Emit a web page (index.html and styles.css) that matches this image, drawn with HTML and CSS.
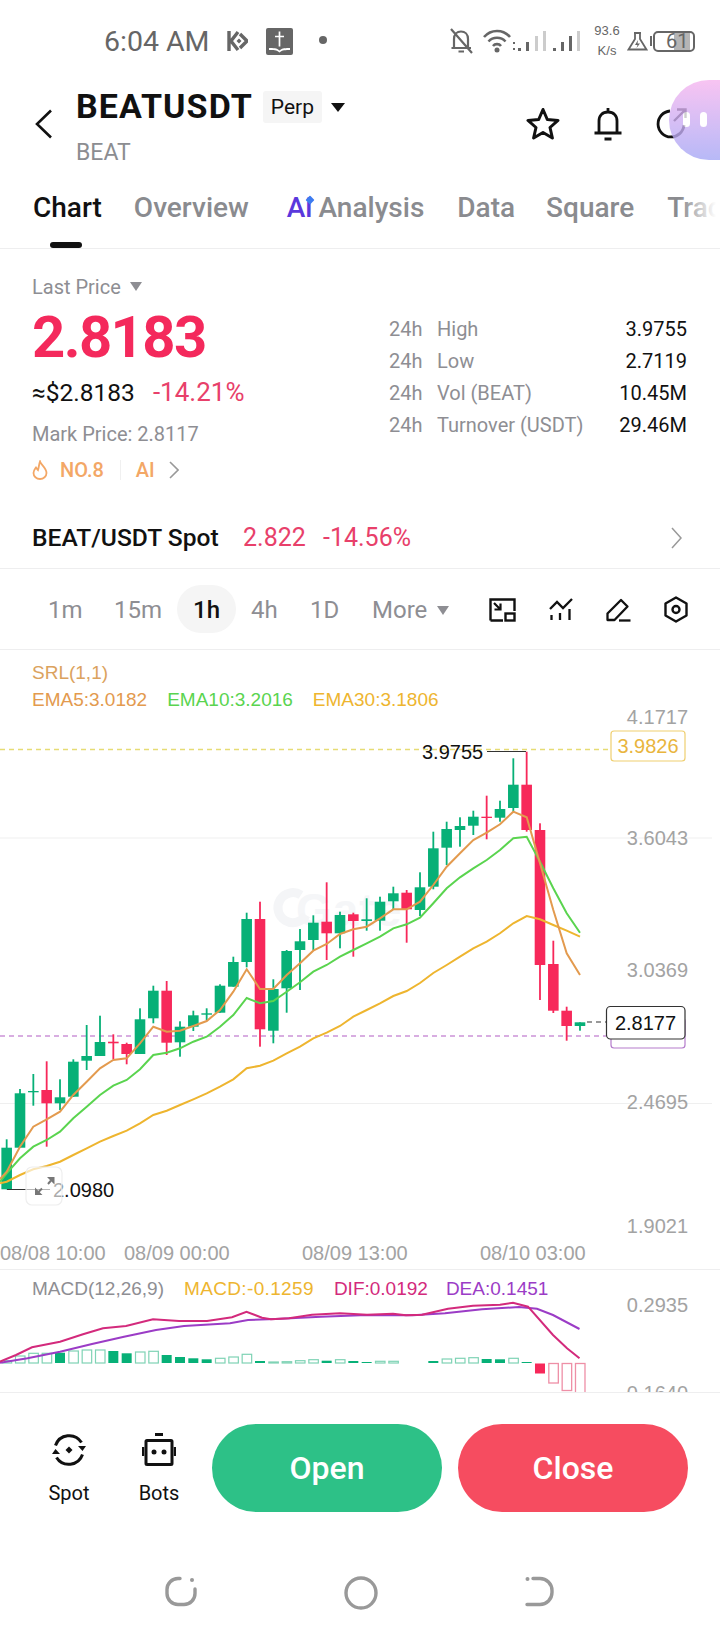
FILE: index.html
```html
<!DOCTYPE html>
<html lang="en">

<head>
    <meta charset="UTF-8">
    <title>BEATUSDT Perp</title>
    <link rel="stylesheet" href="styles.css">
</head>

<body>

<div class="status">
    <span class="clock">6:04 AM</span>
    <svg class="st-k" width="22" height="22" viewBox="0 0 22 22"><path d="M3 1V21M12 2L5 11L12 20M14 4L21 11L14 18" fill="none" stroke="#666" stroke-width="3.4"/><path d="M13 8.5L15.5 11L13 13.5L10.5 11Z" fill="#666"/></svg>
    <svg class="st-book" width="27" height="27" viewBox="0 0 27 27"><rect width="27" height="27" rx="2" fill="#666"/><path d="M13.5 3.500V18.500M9 8.500H18" stroke="#fff" stroke-width="1.700"/><path d="M3 20C7 20 11 20 13.500 22.500C16 20 20 20 24 20V22C20 22 16 22 13.500 24.500C11 22 7 22 3 22Z" fill="#fff"/></svg>
    <span class="st-dot"></span>
    <span class="status-right">
        <svg width="25" height="26" viewBox="0 0 25 26"><path d="M5 20V11C5 6.500 8 3.500 12 3.500C16 3.500 19 6.500 19 11V20M2.500 20H22M9.500 23.500H15M2 1L23 25" fill="none" stroke="#666" stroke-width="2.200"/></svg>
        <svg class="st-wifi" width="33" height="24" viewBox="0 0 33 24"><path d="M1 8C8 0 20 0 27 8M5.500 12.500C10 7.500 18 7.500 22.500 12.500M10 17C12 14.500 16 14.500 18 17" fill="none" stroke="#666" stroke-width="2.600"/><circle cx="14" cy="21" r="2.500" fill="#666"/><path d="M31 13v2M31 19v2" stroke="#666" stroke-width="2"/></svg>
        <svg class="st-signal" width="64" height="22" viewBox="0 0 64 22"><g fill="#666"><rect x="1" y="18" width="3" height="3"/><rect x="9" y="12" width="3" height="9"/><rect x="36" y="18" width="3" height="3"/><rect x="44" y="12" width="3" height="9"/><rect x="52" y="6" width="3" height="15"/></g><g fill="#ccc"><rect x="18" y="6" width="3" height="15"/><rect x="26" y="1" width="3" height="20"/><rect x="60" y="1" width="3" height="20"/></g></svg>
        <span class="st-speed">93.6<br>K/s</span>
        <svg class="st-flask" width="21" height="19" viewBox="0 0 21 19"><path d="M7 1H14M8 1V7L1.500 17.500H19.500L13 7V1" fill="none" stroke="#666" stroke-width="1.800"/><path d="M11 8L8 13H10.500L9.500 16L13 11.500H10.500Z" fill="#666"/></svg>
        <span class="st-nub"></span>
        <span class="st-batt">61</span>
    </span>
</div>

<div class="head">
    <svg class="back" width="18" height="30" viewBox="0 0 18 30"><path d="M16 1.500L2 15L16 28.500" fill="none" stroke="#111" stroke-width="2.600"/></svg>
    <div class="title-col">
        <div class="title-row">
            <span class="title">BEATUSDT</span>
            <span class="chip">Perp</span>
            <span class="tri-black"></span>
        </div>
        <div class="subtitle">BEAT</div>
    </div>
    <div class="head-icons">
        <svg width="34" height="33" viewBox="0 0 34 33"><path d="M17 2.500L21.300 12.500L32 13.400L24 20.500L26.400 31L17 25.500L7.600 31L10 20.500L2 13.400L12.700 12.500Z" fill="none" stroke="#111" stroke-width="3" stroke-linejoin="round"/></svg>
        <svg width="30" height="34" viewBox="0 0 30 34"><path d="M6 25V14C6 8.500 9.500 5 15 5C20.500 5 24 8.500 24 14V25M1.500 26H28.500M11.500 32H18.500M15 1V5" fill="none" stroke="#111" stroke-width="2.800"/></svg>
        <svg width="32" height="32" viewBox="0 0 32 32"><path d="M14 4A13 13 0 1 0 28 18" fill="none" stroke="#111" stroke-width="2.800"/><path d="M18 14L29 3M21 2.500H29.500V11" fill="none" stroke="#111" stroke-width="2.400"/></svg>
    </div>
</div>

<div class="tabs">
    <span class="tab tab-on">Chart</span>
    <span class="tab tab-over">Overview</span>
    <span class="tab tab-ai"><span class="ai-mark">Ai</span>Analysis</span>
    <span class="tab">Data</span>
    <span class="tab tab-sq">Square</span>
    <span class="tab">Trac</span>
    <span class="tab-fade"></span>
</div>

<div class="summary">
    <div class="sum-left">
        <div class="last-label">Last Price <span class="tri-grey"></span></div>
        <div class="big-price">2.8183</div>
        <div class="usd-row"><span>≈$2.8183</span><span class="red usd-pct">-14.21%</span></div>
        <div class="mark">Mark Price: 2.8117</div>
        <div class="rank">
            <svg width="16" height="20" viewBox="0 0 16 20"><path d="M8 1.500C9 5 14.500 8 14.500 13A6.500 6 0 0 1 1.500 13C1.500 10.500 3 9 4 7.500C5 9 5.500 9.500 6 10C7 7 7 4 8 1.500Z" fill="none" stroke="#f3a766" stroke-width="1.800"/></svg>
            <span class="rank-no">NO.8</span>
            <span class="rank-sep"></span>
            <span>AI</span>
            <svg class="rank-go" width="10" height="18" viewBox="0 0 10 18"><path d="M1 1L9 9L1 17" fill="none" stroke="#999" stroke-width="1.600"/></svg>
        </div>
    </div>
    <div class="stats">
        <div class="stat"><span class="h24">24h</span><span class="stat-name">High</span><span class="stat-val">3.9755</span></div>
        <div class="stat"><span class="h24">24h</span><span class="stat-name">Low</span><span class="stat-val">2.7119</span></div>
        <div class="stat"><span class="h24">24h</span><span class="stat-name">Vol (BEAT)</span><span class="stat-val">10.45M</span></div>
        <div class="stat"><span class="h24">24h</span><span class="stat-name">Turnover (USDT)</span><span class="stat-val">29.46M</span></div>
    </div>
</div>

<div class="spot-row">
    <span class="spot-name">BEAT/USDT Spot</span>
    <span class="red spot-price">2.822</span>
    <span class="red">-14.56%</span>
    <svg class="spot-go" width="11" height="22" viewBox="0 0 11 22"><path d="M1 1L10 11L1 21" fill="none" stroke="#999" stroke-width="1.500"/></svg>
</div>

<div class="intervals">
    <span class="iv iv-1m">1m</span>
    <span class="iv iv-15">15m</span>
    <span class="iv iv-on">1h</span>
    <span class="iv iv-4h">4h</span>
    <span class="iv iv-1d">1D</span>
    <span class="iv iv-more">More <span class="tri-grey"></span></span>
    <span class="tools">
        <svg width="27" height="24" viewBox="0 0 27 24"><path d="M1.500 22.500V1.500H25.500V13M1.500 22.500H14" fill="none" stroke="#111" stroke-width="2.400"/><rect x="16.500" y="15.500" width="9" height="7" fill="none" stroke="#111" stroke-width="2.400"/><path d="M5 5L11 11M11.500 5.500V11.500H5.500" fill="none" stroke="#111" stroke-width="2.200"/></svg>
        <svg width="24" height="23" viewBox="0 0 24 23"><path d="M1 11L8 4L14 10L23 1" fill="none" stroke="#111" stroke-width="2.300"/><path d="M2.500 17V22M11 15V22M20.500 11V22" fill="none" stroke="#111" stroke-width="2.300"/></svg>
        <svg width="25" height="24" viewBox="0 0 25 24"><path d="M1.500 22V15.500L15 2L21.500 8.500L8.500 22Z" fill="none" stroke="#111" stroke-width="2.300" stroke-linejoin="round"/><path d="M13 22.500H24.500" stroke="#111" stroke-width="2.300"/></svg>
        <svg width="24" height="27" viewBox="0 0 24 27"><path d="M12 1.500L22.500 7.500V19.500L12 25.500L1.500 19.500V7.500Z" fill="none" stroke="#111" stroke-width="2.400" stroke-linejoin="round"/><circle cx="12" cy="13.500" r="3.500" fill="none" stroke="#111" stroke-width="2.400"/></svg>
    </span>
</div>

<div class="kline">
    <svg class="plot" id="kline-plot" width="720" height="619" viewBox="0 650 720 619"></svg>
    <div class="legend">
        <div class="srl">SRL(1,1)</div>
        <div class="ema-row">
            <span class="c-ema5">EMA5:3.0182</span>
            <span class="c-ema10">EMA10:3.2016</span>
            <span class="c-ema30">EMA30:3.1806</span>
        </div>
    </div>
</div>

<div class="macd">
    <svg class="plot" id="macd-plot" width="720" height="122" viewBox="0 1270 720 122"></svg>
    <div class="macd-legend">
        <span class="c-macd">MACD(12,26,9)</span>
        <span class="c-ema30 c-macdval">MACD:-0.1259</span>
        <span class="c-dif">DIF:0.0192</span>
        <span class="c-dea">DEA:0.1451</span>
    </div>
</div>

<div class="actions">
    <div class="side-btn">
        <svg width="34" height="34" viewBox="0 0 34 34"><path d="M3.500 12.500A14.500 14.500 0 0 1 29.500 9.500M30.500 21.500A14.500 14.500 0 0 1 4.500 24.500" fill="none" stroke="#111" stroke-width="3"/><path d="M26 13H34L30.500 18ZM0 21H8L3.500 16Z" fill="#111"/><path d="M17 13.500L20.500 17L17 20.500L13.500 17Z" fill="#111"/></svg>
        <span>Spot</span>
    </div>
    <div class="side-btn">
        <svg width="34" height="34" viewBox="0 0 34 34"><path d="M13 1.500H21" stroke="#111" stroke-width="3"/><rect x="4" y="7.500" width="26" height="24" rx="1" fill="none" stroke="#111" stroke-width="3"/><path d="M1 14V23M33 14V23" stroke="#111" stroke-width="2.500"/><circle cx="12" cy="19" r="2.500" fill="#111"/><circle cx="22" cy="19" r="2.500" fill="#111"/></svg>
        <span>Bots</span>
    </div>
    <button class="trade trade-open">Open</button>
    <button class="trade trade-close">Close</button>
</div>

<div class="nav">
    <svg width="32" height="31" viewBox="0 0 32 31"><path d="M15 2.500H13A11 11 0 0 0 2 13.500V17.500A11 11 0 0 0 13 28.500H19A11 11 0 0 0 30 17.500V13" fill="none" stroke="#999" stroke-width="3.400" stroke-linecap="round"/><circle cx="27" cy="4" r="2" fill="#999"/></svg>
    <svg width="34" height="34" viewBox="0 0 34 34"><circle cx="17" cy="17" r="15" fill="none" stroke="#999" stroke-width="3.400"/></svg>
    <svg width="29" height="31" viewBox="0 0 29 31"><path d="M8 2.500H15A12 12 0 0 1 27 14.500V16.500A12 12 0 0 1 15 28.500H2" fill="none" stroke="#999" stroke-width="3.400" stroke-linecap="round"/><circle cx="2.500" cy="3" r="2" fill="#999"/></svg>
</div>

<div class="float-ball"><span></span><span></span></div>

<script src="chart.js"></script>

</body>
</html>
```

FILE: styles.css
```css
* {
    box-sizing: border-box;
}

body {
    margin: 0;
    width: 720px;
    height: 1640px;
    overflow: hidden;
    position: relative;
    background-color: #fff;
    font-family: Roboto, "Noto Sans", sans-serif;
    color: #111;
}

.red {
    color: #e8406a;
}

.status {
    height: 80px;
    padding-top: 2px;
    padding-left: 104px;
    display: flex;
    align-items: center;
    color: #666;
}

.clock {
    font-size: 28.5px;
    width: 122px;
}

.st-book {
    margin-left: 18px;
}

.st-dot {
    width: 8px;
    height: 8px;
    margin-left: 26px;
    margin-top: -2px;
    border-radius: 50%;
    background-color: #666;
}

.status-right {
    margin-left: auto;
    margin-right: 25px;
    display: flex;
    align-items: center;
}

.st-wifi {
    margin-left: 9px;
}

.st-signal {
    margin-left: 1px;
}

.st-speed {
    width: 30px;
    margin-left: 11px;
    font-size: 13px;
    line-height: 20px;
    text-align: center;
    font-family: "Liberation Sans", sans-serif;
}

.st-flask {
    margin-left: 5px;
}

.st-nub {
    width: 2px;
    height: 10px;
    margin-left: 2px;
    background-color: #666;
}

.st-batt {
    width: 42px;
    height: 21px;
    margin-left: 1px;
    border: 2px solid #666;
    border-radius: 5px;
    font-size: 20px;
    line-height: 17px;
    padding-left: 11px;
    background: linear-gradient(90deg, #fff 50%, #b5b5b5 50%, #b5b5b5 92%, #fff 92%);
}

.head {
    height: 92px;
    padding-left: 35px;
    display: flex;
}

.back {
    margin-top: 29px;
}

.title-col {
    margin-left: 23px;
}

.title-row {
    display: flex;
    align-items: center;
    height: 52px;
}

.title {
    font-size: 34px;
    font-weight: 700;
    letter-spacing: 1.100px;
}

.chip {
    margin-left: 10px;
    margin-top: 2px;
    width: 59px;
    height: 32px;
    background-color: #f5f5f5;
    border-radius: 3px;
    font-size: 21px;
    line-height: 32px;
    text-align: center;
}

.tri-black {
    margin-left: 9px;
    margin-top: 3px;
    border-left: 7px solid transparent;
    border-right: 7px solid transparent;
    border-top: 9px solid #111;
}

.tri-grey {
    display: inline-block;
    margin-left: 4px;
    vertical-align: 3px;
    border-left: 6px solid transparent;
    border-right: 6px solid transparent;
    border-top: 9px solid #8e8e93;
}

.subtitle {
    margin-top: 7px;
    font-size: 23px;
    color: #8c8d91;
}

.head-icons {
    margin-left: auto;
    margin-right: 32px;
    margin-top: 27px;
    display: flex;
    align-items: flex-start;
    gap: 33px;
}

.tabs {
    height: 77px;
    padding-left: 33px;
    padding-top: 18px;
    display: flex;
    gap: 33px;
    overflow: hidden;
    position: relative;
    border-bottom: 1px solid #eeeeef;
    white-space: nowrap;
}

.tab {
    font-size: 28px;
    line-height: 36px;
    font-weight: 500;
    color: #8a8b8f;
    flex: none;
}

.tab-on {
    color: #111;
    position: relative;
}

.tab-on::after {
    content: "";
    position: absolute;
    left: 17px;
    top: 52px;
    width: 32px;
    height: 6px;
    border-radius: 3px;
    background-color: #111;
}

.tab-over {
    margin-left: -1px;
}

.tab-sq {
    margin-left: -2px;
}

.tab-fade {
    position: absolute;
    right: 0;
    top: 0;
    width: 40px;
    height: 76px;
    background: linear-gradient(90deg, rgba(255, 255, 255, 0), #fff 90%);
}

.tab-ai {
    margin-left: 5px;
}

.ai-mark {
    color: #5a38dc;
    margin-right: 6px;
    position: relative;
}

.ai-mark::after {
    content: "";
    position: absolute;
    right: -1px;
    top: 5px;
    width: 8px;
    height: 8px;
    background-color: #3d7bf0;
    transform: rotate(45deg) scale(0.8);
    border-radius: 1px;
}

.summary {
    height: 241px;
    padding: 0 33px 0 32px;
    display: flex;
    justify-content: space-between;
}

.last-label {
    margin-top: 26px;
    font-size: 20px;
    line-height: 24px;
    color: #8e8e93;
}

.big-price {
    margin-top: 3px;
    font-size: 58px;
    line-height: 70px;
    font-weight: 700;
    letter-spacing: -1.600px;
    color: #f4295c;
}

.usd-row {
    margin-top: 4px;
    display: flex;
    align-items: baseline;
    gap: 18px;
    font-size: 24.500px;
    line-height: 32px;
}

.usd-pct {
    font-size: 26px;
}

.mark {
    margin-top: 12px;
    font-size: 20px;
    line-height: 26px;
    color: #8e8e93;
}

.rank {
    margin-top: 10px;
    display: flex;
    align-items: center;
    font-size: 20px;
    line-height: 26px;
    font-weight: 500;
    color: #f3a766;
}

.rank-no {
    margin-left: 12px;
}

.rank-sep {
    width: 1px;
    height: 20px;
    margin: 0 15px 0 16px;
    background-color: #f0f0f0;
}

.rank-go {
    margin-left: 14px;
}

.stats {
    width: 298px;
    padding-top: 64px;
}

.stat {
    display: flex;
    height: 32px;
    align-items: center;
    font-size: 20px;
    color: #8e8e93;
}

.h24 {
    width: 48px;
}

.stat-val {
    margin-left: auto;
    color: #111;
}

.spot-row {
    height: 79px;
    padding: 18px 38px 1px 32px;
    display: flex;
    align-items: center;
    border-bottom: 1px solid #eeeeef;
    font-size: 25px;
}

.spot-name {
    font-size: 24.600px;
    font-weight: 500;
    width: 211px;
}

.spot-price {
    width: 80px;
}

.spot-go {
    margin-left: auto;
}

.intervals {
    height: 81px;
    padding-top: 16px;
    display: flex;
    align-items: flex-start;
    border-bottom: 1px solid #eeeeef;
    font-size: 24px;
    color: #8e8e93;
    position: relative;
}

.iv {
    line-height: 50px;
    flex: none;
}

.iv-1m {
    margin-left: 48px;
    width: 66px;
}

.iv-15 {
    width: 63px;
}

.iv-on {
    width: 59px;
    height: 48px;
    border-radius: 24px;
    background-color: #f5f5f5;
    color: #111;
    font-weight: 500;
    text-align: center;
}

.iv-4h {
    margin-left: 15px;
    width: 59px;
}

.iv-1d {
    width: 62px;
}

.iv-more {
    width: 90px;
}

.tools {
    margin-top: 11px;
    margin-left: 27px;
    display: flex;
    align-items: center;
    gap: 33px;
}

.kline {
    height: 620px;
    position: relative;
    border-bottom: 1px solid #eeeeef;
    font-family: "Liberation Sans", sans-serif;
}

.plot {
    position: absolute;
    left: 0;
    top: 0;
    display: block;
}

.plot text {
    font-family: "Liberation Sans", sans-serif;
}

.legend {
    position: relative;
    padding: 9px 0 0 32px;
    font-size: 19px;
    line-height: 27px;
}

.srl {
    color: #dba25e;
}

.ema-row {
    display: flex;
    gap: 20px;
}

.c-ema5 {
    color: #e39a4e;
}

.c-ema10 {
    color: #5ad44f;
}

.c-ema30 {
    color: #eeb52f;
}

.c-macd {
    color: #8e8e93;
}

.c-macdval {
    letter-spacing: 0.350px;
}

.c-dif {
    color: #d32a7c;
}

.c-dea {
    margin-left: -2px;
    color: #9b3cc6;
}

.macd {
    height: 123px;
    position: relative;
    overflow: hidden;
    border-bottom: 1px solid #eeeeef;
    font-family: "Liberation Sans", sans-serif;
}

.macd-legend {
    position: relative;
    padding: 5px 0 0 32px;
    display: flex;
    gap: 20px;
    font-size: 19px;
    line-height: 28px;
}

.actions {
    height: 148px;
    padding: 31px 32px 0 0;
    display: flex;
    align-items: flex-start;
}

.side-btn {
    width: 90px;
    margin-top: 9px;
    display: flex;
    flex-direction: column;
    align-items: center;
    font-size: 20px;
    line-height: 26px;
}

.side-btn:first-child {
    margin-left: 24px;
}

.side-btn span {
    margin-top: 13px;
}

.trade {
    width: 230px;
    height: 88px;
    border: none;
    border-radius: 44px;
    color: #fff;
    font-family: Roboto, sans-serif;
    font-size: 32px;
    font-weight: 500;
}

.trade-open {
    margin-left: 8px;
    background-color: #2dc187;
}

.trade-close {
    margin-left: 16px;
    background-color: #f64c60;
}

.nav {
    padding: 35px 166px 0 165px;
    display: flex;
    justify-content: space-between;
    align-items: flex-start;
}

.float-ball {
    position: absolute;
    right: 0;
    top: 80px;
    width: 51px;
    height: 80px;
    padding: 32px 0 0 14px;
    display: flex;
    gap: 10px;
    border-radius: 40px 0 0 40px;
    background: linear-gradient(180deg, #f7b6f0, #a6a8f6);
    opacity: 0.8;
}

.float-ball span {
    width: 7px;
    height: 15px;
    border-radius: 4px;
    background-color: #fff;
}
```

FILE: chart.js
```js
const GREEN = '#07b077';
const RED = '#f7285a';
const STEP = 13.333;

// body top, body bottom, high, low, colour
const candles = [
    [1147.7, 1189.3, 1139.3, 1189.3, 'g'], [1093.3, 1147.7, 1089, 1147.7, 'g'], [1091, 1092.3, 1074, 1105.7, 'g'],
    [1090, 1103.3, 1061.3, 1146.7, 'r'], [1097.3, 1103.3, 1079.3, 1110, 'g'], [1061.7, 1096.7, 1059.3, 1097, 'g'],
    [1056, 1060.7, 1025, 1070, 'g'], [1042, 1056, 1015.7, 1056, 'g'], [1041.7, 1043.3, 1034.3, 1059.3, 'r'],
    [1044, 1054, 1042.7, 1064.3, 'r'], [1019.3, 1054, 1008.3, 1054, 'g'], [990.7, 1018.3, 985.7, 1023.3, 'g'],
    [990.7, 1042.7, 981, 1055, 'r'], [1026.7, 1042.3, 1021.3, 1056.7, 'g'], [1015.3, 1026.7, 1010.7, 1031, 'g'],
    [1013.3, 1014.7, 1008.3, 1020, 'g'], [985.7, 1012.7, 984.3, 1012.7, 'g'], [962, 986.7, 956.7, 986.7, 'g'],
    [919, 962, 912.7, 967.3, 'g'], [919, 1029.3, 901.7, 1046.7, 'r'], [989, 1030.7, 979.3, 1043.3, 'g'],
    [951, 988.3, 950, 1012.7, 'g'], [941.3, 950, 929, 990, 'g'], [922.7, 940, 915.3, 950, 'g'],
    [921.7, 933.3, 882.3, 960, 'r'], [915, 933.3, 911.7, 948.3, 'g'], [914.3, 921, 912.7, 956.7, 'r'],
    [919.3, 921, 898.3, 930.7, 'g'], [901.7, 920.7, 896.7, 930.7, 'g'], [893.3, 901.3, 886.7, 910, 'g'],
    [892.7, 909.3, 890, 942.7, 'r'], [887.3, 910, 872.3, 916, 'g'], [848.3, 886.7, 831.7, 889.3, 'g'],
    [829, 847.7, 821.7, 865, 'g'], [826, 830, 817.3, 846.7, 'g'], [816.7, 825.7, 810.7, 835, 'g'],
    [816.7, 818, 795.7, 839.3, 'r'], [809, 817.7, 800.7, 821.7, 'g'], [784.7, 808, 758.3, 811.7, 'g'],
    [784.7, 830, 751.7, 831.7, 'r'], [830, 965, 823.3, 1000, 'r'], [964, 1010.7, 940.7, 1013, 'r'],
    [1010.7, 1026, 1006.7, 1040.7, 'r'], [1022.3, 1026, 1022.3, 1030.7, 'g']
];

const ema5 = [1171.7, 1146.7, 1126.7, 1119.3, 1111.7, 1095, 1081.7, 1068.3, 1060, 1058.3, 1043.3, 1026.7, 1031.7, 1030.7, 1026, 1021, 1010, 991.7, 969.3, 989, 989, 975, 963.3, 950.7, 944, 934, 929.3, 926.7, 918.3, 909.3, 909.3, 901.7, 885, 866.7, 853.3, 840, 832.7, 824.3, 811.7, 817.3, 863.3, 910, 953.3, 975];
const ema10 = [1173.3, 1158.3, 1146.7, 1140, 1131.7, 1118.3, 1106.7, 1095, 1085.7, 1080, 1069.3, 1055, 1052.7, 1048.3, 1041.7, 1036.7, 1026.7, 1015, 998, 1003.3, 1001, 991.7, 982.3, 971.7, 965, 956.7, 950, 943.3, 936.7, 928.3, 924.3, 917.7, 903.3, 888.3, 877.3, 868.3, 860, 850, 838.3, 836.7, 861.7, 888.3, 913.3, 932.7];
const ema30 = [1181.7, 1175, 1169.3, 1166, 1161.7, 1155, 1148.3, 1141.7, 1136, 1130.7, 1123.3, 1115, 1110.7, 1105, 1099.3, 1093.3, 1086.7, 1079.3, 1068.3, 1065.7, 1060.7, 1053.3, 1046.7, 1038.3, 1032.7, 1026, 1016.7, 1010, 1003.3, 996, 991, 983, 973, 965, 956.7, 948.3, 941.7, 933.3, 923.3, 916, 919.3, 925, 930.7, 936.7];

const dif = [[0, 1361.7], [16, 1355], [32, 1347.3], [60, 1341.7], [83, 1334.3], [103, 1328.3], [126, 1326], [153, 1319.3], [179, 1321], [207, 1321], [232, 1317.3], [246.5, 1311.7], [262, 1317.7], [271, 1319.3], [289, 1318.3], [312, 1314.7], [340, 1313.3], [367, 1314.7], [393, 1313.7], [406, 1315.3], [422, 1314.7], [448, 1308.7], [473, 1305.7], [500, 1304.7], [513, 1302.7], [528, 1306.7], [553, 1335], [567, 1348.3], [579.5, 1358.3]];
const dea = [[0, 1362.7], [27.5, 1358.3], [60, 1351.7], [92, 1344], [124, 1336.7], [156, 1330], [184, 1326], [230, 1323.3], [248, 1320], [275.5, 1319], [321, 1316.7], [367, 1315], [413, 1315.3], [445, 1313.3], [482, 1309.3], [519, 1307], [537, 1308.7], [553, 1315], [579.5, 1329]];

// bar top in px, filled or hollow; the last four are negative bars
const bars = [
    [1360.7, 0], [1356, 0], [1353.3, 0], [1353.3, 0], [1352.7, 1], [1351, 0], [1350, 0], [1350, 0], [1351, 1], [1353.3, 1],
    [1352, 0], [1351.3, 0], [1355, 1], [1357, 1], [1358.3, 1], [1359.3, 1], [1358.3, 0], [1357, 0], [1354.3, 0], [1361, 1],
    [1362, 0], [1361.7, 0], [1360.7, 0], [1359.7, 0], [1360.7, 1], [1359.7, 0], [1361, 1], [1362, 1], [1361.3, 0], [1361.3, 0],
    null, null, [1361, 1], [1359, 0], [1358.3, 0], [1357.7, 0], [1359, 1], [1359.3, 1], [1358.3, 0], [1362, 1]
];

function midX(i) {
    return 6.67 + STEP * i;
}

function linePoints(ys, startX, startY) {
    const pts = ys.map((y, i) => midX(i).toFixed(1) + ',' + y);
    pts.unshift(startX + ',' + startY);
    return pts.join(' ');
}

function label(x, y, text, fill, anchor) {
    return '<text x="' + x + '" y="' + y + '" font-size="20" fill="' + fill + '" text-anchor="' + (anchor || 'start') + '">' + text + '</text>';
}

function drawKline() {
    let s = '';

    s += '<path d="M0 838H712M0 1103.500H712" stroke="#efefef" stroke-width="1"/>';
    s += '<text x="296" y="926" font-size="46" font-weight="700" fill="#f5f6f8" letter-spacing="1">Gate</text>';
    s += '<path d="M301 895A15 15 0 1 0 306 915" fill="none" stroke="#f4f5f7" stroke-width="9"/>';

    s += '<path d="M0 749.500H611" stroke="#e6dc74" stroke-width="1.300" stroke-dasharray="5 4"/>';
    s += '<path d="M0 1036H606" stroke="#cc93d8" stroke-width="1.300" stroke-dasharray="5 4"/>';

    candles.forEach((c, i) => {
        const x = midX(i);
        const col = c[4] === 'g' ? GREEN : RED;
        s += '<rect x="' + (x - 0.9) + '" y="' + c[2] + '" width="1.800" height="' + (c[3] - c[2]) + '" fill="' + col + '"/>';
        s += '<rect x="' + (x - 5.3) + '" y="' + c[0] + '" width="10.600" height="' + (c[1] - c[0]) + '" fill="' + col + '"/>';
    });

    s += '<polyline points="' + linePoints(ema30, 0, 1183.3) + '" fill="none" stroke="#eeb52f" stroke-width="2"/>';
    s += '<polyline points="' + linePoints(ema10, 0, 1181.7) + '" fill="none" stroke="#5ad44f" stroke-width="2"/>';
    s += '<polyline points="' + linePoints(ema5, 0, 1179) + '" fill="none" stroke="#e39a4e" stroke-width="2"/>';

    s += label(688, 724, '4.1717', '#a3a3a3', 'end');
    s += label(688, 845, '3.6043', '#a3a3a3', 'end');
    s += label(688, 977, '3.0369', '#a3a3a3', 'end');
    s += label(688, 1109, '2.4695', '#a3a3a3', 'end');
    s += label(688, 1233, '1.9021', '#a3a3a3', 'end');

    s += label(0, 1260, '08/08 10:00', '#a3a3a3');
    s += label(124, 1260, '08/09 00:00', '#a3a3a3');
    s += label(302, 1260, '08/09 13:00', '#a3a3a3');
    s += label(480, 1260, '08/10 03:00', '#a3a3a3');

    // high and low markers
    s += label(422, 759, '3.9755', '#111');
    s += '<path d="M487 751.500H526" stroke="#333" stroke-width="1.200"/>';
    s += label(53, 1197, '2.0980', '#111');
    s += '<path d="M7 1189.500H50" stroke="#333" stroke-width="1.200"/>';

    // price boxes
    s += '<rect x="611" y="731" width="74" height="30" rx="3" fill="#fff" stroke="#efcf70" stroke-width="1.200"/>';
    s += label(648, 753, '3.9826', '#e9b53e', 'middle');
    s += '<rect x="611" y="1018" width="74" height="30" rx="3" fill="#fff" stroke="#b57ccc" stroke-width="1.200"/>';
    s += '<path d="M587 1022H606" stroke="#333" stroke-width="1.200" stroke-dasharray="5 4"/>';
    s += '<rect x="606.500" y="1006.500" width="78.500" height="32.500" rx="4" fill="#fff" stroke="#333" stroke-width="1.200"/>';
    s += label(645.500, 1030, '2.8177', '#111', 'middle');

    // expand button lies over the low label
    s += '<rect x="26" y="1167" width="36" height="38" rx="6" fill="#fff" fill-opacity="0.65" stroke="#eeeeee" stroke-width="1.200"/>';
    s += '<path d="M47 1177H54.500V1184.500ZM35 1187.500V1195H42.500Z" fill="#777"/><path d="M48 1184L51 1180.500M38.500 1192L42 1188.500" stroke="#777" stroke-width="2"/>';

    document.getElementById('kline-plot').innerHTML = s;
}

function drawMacd() {
    let s = '';
    const base = 1363;

    bars.forEach((b, i) => {
        if (!b) {
            return;
        }
        const x = midX(i) - 5;
        if (b[1]) {
            s += '<rect x="' + x + '" y="' + b[0] + '" width="10" height="' + (base - b[0]) + '" fill="' + GREEN + '"/>';
        } else {
            s += '<rect x="' + (x + 0.5) + '" y="' + b[0] + '" width="9.500" height="' + (base - b[0]) + '" fill="#fff" stroke="#7fd3b5" stroke-width="1.200"/>';
        }
    });

    s += '<rect x="' + (midX(40) - 5) + '" y="1363.500" width="10" height="10" fill="' + RED + '"/>';
    [1383, 1390.500, 1394].forEach((bottom, i) => {
        s += '<rect x="' + (midX(41 + i) - 4.500) + '" y="1363.500" width="9.500" height="' + (bottom - 1363.500) + '" fill="#fff" stroke="#ee8fa6" stroke-width="1.300"/>';
    });

    s += '<polyline points="' + dea.join(' ') + '" fill="none" stroke="#9b3cc6" stroke-width="2"/>';
    s += '<polyline points="' + dif.join(' ') + '" fill="none" stroke="#d32a7c" stroke-width="2"/>';

    s += label(688, 1312, '0.2935', '#a3a3a3', 'end');
    s += label(688, 1400, '0.1640', '#a3a3a3', 'end');

    document.getElementById('macd-plot').innerHTML = s;
}

drawKline();
drawMacd();
```
